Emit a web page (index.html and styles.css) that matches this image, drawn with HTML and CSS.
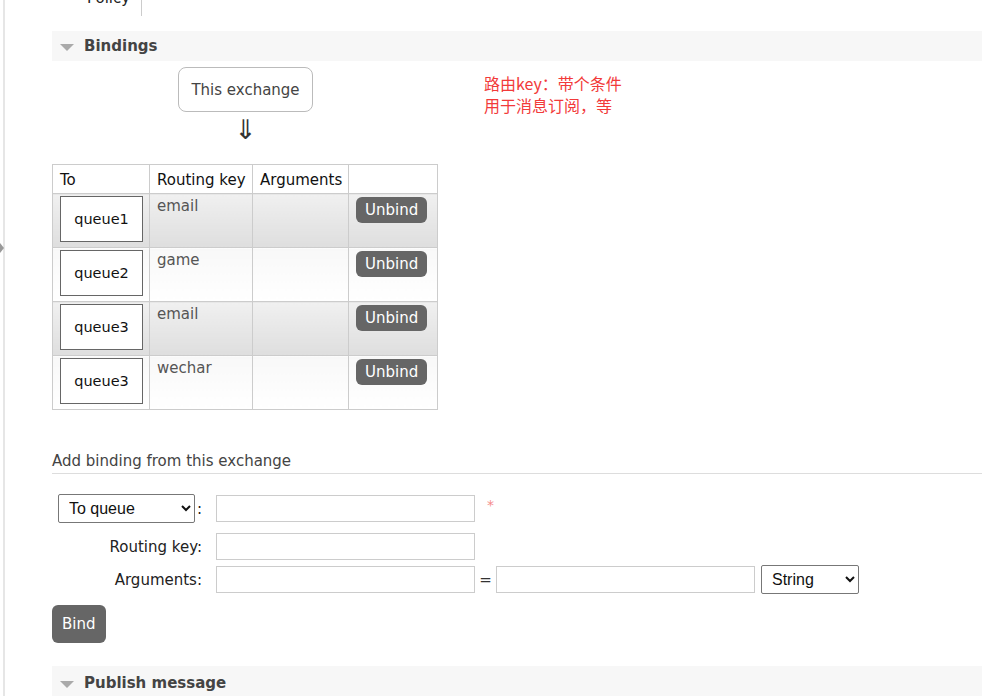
FILE: index.html
```html
<!DOCTYPE html>
<html>
<head>
<meta charset="utf-8">
<link rel="stylesheet" href="styles.css">
</head>
<body>
<div class="page">
  <span class="side-toggle"></span>
  <div class="top-row">
    <div class="policy-cell"><span class="policy-text">Policy</span></div>
  </div>

  <div class="section-h"><span class="tri"></span><span class="section-title">Bindings</span></div>

  <div class="diagram">
    <div class="src-col">
      <div class="src-box">This exchange</div>
      <div class="arrow">&#8659;</div>
    </div>
    <div class="note">路由key：带个条件<br>用于消息订阅，等</div>
  </div>

  <table class="bindings">
    <colgroup><col class="c1"><col class="c2"><col class="c3"><col class="c4"></colgroup>
    <thead>
      <tr><th>To</th><th>Routing key</th><th>Arguments</th><th></th></tr>
    </thead>
    <tbody>
      <tr class="alt1"><td><div class="qbox">queue1</div></td><td>email</td><td></td><td><span class="btn">Unbind</span></td></tr>
      <tr class="alt2"><td><div class="qbox">queue2</div></td><td>game</td><td></td><td><span class="btn">Unbind</span></td></tr>
      <tr class="alt1"><td><div class="qbox">queue3</div></td><td>email</td><td></td><td><span class="btn">Unbind</span></td></tr>
      <tr class="alt2"><td><div class="qbox">queue3</div></td><td>wechar</td><td></td><td><span class="btn">Unbind</span></td></tr>
    </tbody>
  </table>

  <h3 class="sub-h">Add binding from this exchange</h3>

  <div class="form">
    <div class="frow first">
      <div class="lbl"><select class="sel sel-to"><option>To queue</option></select><span class="colon">:</span></div>
      <input class="inp" type="text">
      <span class="req">*</span>
    </div>
    <div class="frow">
      <div class="lbl">Routing key:</div>
      <input class="inp" type="text">
    </div>
    <div class="frow">
      <div class="lbl">Arguments:</div>
      <input class="inp" type="text">
      <span class="eq">=</span>
      <input class="inp" type="text">
      <select class="sel sel-type"><option>String</option></select>
    </div>
    <button class="btn bind-btn">Bind</button>
  </div>

  <div class="section-h publish"><span class="tri"></span><span class="section-title">Publish message</span></div>
</div>
</body>
</html>
```

FILE: styles.css
```css
html, body {
  margin: 0;
  padding: 0;
  background: #fff;
  overflow: hidden;
}
body {
  font-family: "DejaVu Sans", Verdana, sans-serif;
  font-size: 15px;
  color: #444;
}
.page {
  position: relative;
  margin-left: 3px;
  border-left: 2px solid #e6e6e6;
  padding-left: 47px;
  height: 696px;
  box-sizing: border-box;
}
.side-toggle {
  position: absolute;
  left: -5px;
  top: 243px;
  width: 0;
  height: 0;
  border-top: 5px solid transparent;
  border-bottom: 5px solid transparent;
  border-left: 4px solid #999;
}
.top-row {
  height: 16px;
  display: flex;
}
.policy-cell {
  width: 89px;
  border-right: 1px solid #ccc;
  overflow: hidden;
  position: relative;
}
.policy-text {
  display: block;
  margin-top: -11px;
  padding-left: 35px;
  color: #222;
  font-size: 15px;
}
.section-h {
  margin-top: 15px;
  height: 30px;
  background: #f7f7f7;
  display: flex;
  align-items: center;
  padding-left: 8px;
}
.tri {
  width: 0;
  height: 0;
  border-left: 7px solid transparent;
  border-right: 7px solid transparent;
  border-top: 7px solid #aaa;
  margin-right: 10px;
  margin-top: 2px;
}
.section-title {
  font-weight: bold;
  font-size: 15px;
  color: #444;
}
.diagram {
  display: flex;
  align-items: flex-start;
  padding-left: 126px;
  margin-top: 6px;
}
.src-col {
  display: flex;
  flex-direction: column;
  align-items: center;
  width: 135px;
}
.src-box {
  width: 135px;
  height: 45px;
  box-sizing: border-box;
  border: 1px solid #bbb;
  border-radius: 8px;
  display: flex;
  align-items: center;
  justify-content: center;
  font-size: 15px;
  color: #444;
}
.arrow {
  font-size: 27px;
  line-height: 30px;
  height: 30px;
  color: #333;
  margin-top: 3px;
  font-family: "DejaVu Sans", sans-serif;
}
.note {
  margin-left: 171px;
  margin-top: 5px;
  color: #f23a3a;
  font-family: "Noto Sans CJK SC", "Noto Sans", sans-serif;
  font-size: 16px;
  line-height: 22px;
}
.bindings {
  border-collapse: collapse;
  table-layout: fixed;
  width: 385px;
  margin-top: 19px;
  font-size: 15px;
}
.c1 { width: 97px; }
.c2 { width: 103px; }
.c3 { width: 96px; }
.c4 { width: 89px; }
.bindings th, .bindings td {
  border: 1px solid #ccc;
  text-align: left;
  vertical-align: top;
  white-space: nowrap;
  overflow: hidden;
}
.bindings th {
  font-weight: normal;
  color: #111;
  height: 27px;
  padding: 1px 6px 0 7px;
  vertical-align: middle;
  background: #fff;
}
.bindings td {
  height: 54px;
  padding: 3px 6px 0 7px;
  box-sizing: border-box;
  color: #555;
}
.bindings td:first-child { padding-top: 2px; }
.alt1 td { background: linear-gradient(#f0f0f0, #dedede); }
.alt2 td { background: linear-gradient(#f8f8f8, #ffffff); }
.qbox {
  width: 83px;
  height: 46px;
  box-sizing: border-box;
  border: 1px solid #666;
  background: #fff;
  display: flex;
  align-items: center;
  justify-content: center;
  color: #111;
  font-size: 14.5px;
}
.btn {
  display: inline-block;
  background: #666;
  color: #fff;
  border-radius: 6px;
  border: none;
  font-family: "DejaVu Sans", Verdana, sans-serif;
  font-size: 15px;
  padding: 0 9px;
  height: 26px;
  line-height: 26px;
}
.sub-h {
  margin: 42px 0 0 0;
  font-size: 15px;
  font-weight: normal;
  color: #444;
  padding-bottom: 3px;
  border-bottom: 1px solid #ddd;
}
.form {
  padding-top: 20px;
}
.frow {
  display: flex;
  align-items: center;
  margin-bottom: 5px;
}
.frow.first { margin-bottom: 10px; }
.lbl {
  width: 150px;
  text-align: right;
  color: #222;
  margin-right: 14px;
  display: flex;
  justify-content: flex-end;
  align-items: center;
  font-size: 15px;
}
.colon { margin-left: 2px; }
.inp {
  width: 259px;
  height: 27px;
  box-sizing: border-box;
  border: 1px solid #ccc;
  margin: 0;
  padding: 0 4px;
}
.req {
  color: #f58a8a;
  margin-left: 12px;
  margin-top: -8px;
  font-size: 14px;
}
.eq {
  width: 21px;
  text-align: center;
  color: #333;
}
.sel {
  font-family: "Liberation Sans", Arial, sans-serif;
  font-size: 16px;
  height: 29px;
  border: 1px solid #777;
  border-radius: 2px;
  background: #fff;
  color: #111;
  padding: 0 6px;
}
.sel-to { width: 137px; }
.sel-type { width: 98px; margin-left: 6px; }
.bind-btn {
  height: 38px;
  line-height: 38px;
  padding: 0 10px;
  margin-top: 11px;
  display: block;
}
.publish {
  margin-top: 23px;
  height: 34px;
}
```
